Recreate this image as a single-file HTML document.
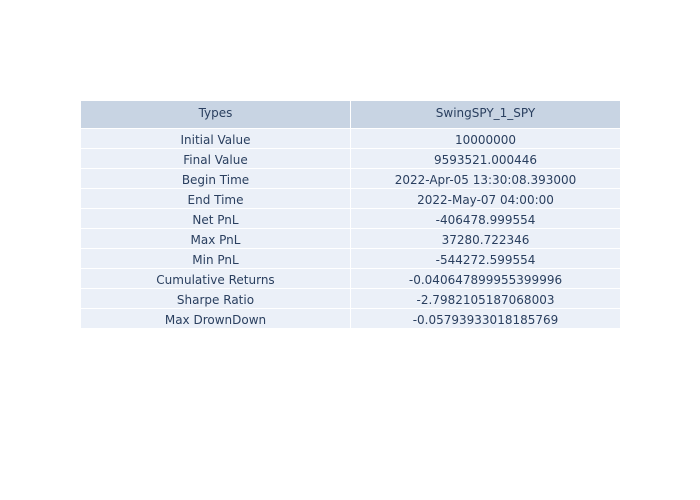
<!DOCTYPE html><html><head><style>
body{margin:0;width:700px;height:500px;background:#fff;position:relative;font-family:"DejaVu Sans",sans-serif;font-size:12px;color:#2a3f5f}
.r{position:absolute;left:81px;width:539px;display:flex}
.c{background:#ebf0f8;text-align:center;line-height:19px;height:17px;padding-top:2px}
.c1{width:269px;margin-right:1px}.c2{width:269px}
.h .c{background:#c8d4e3;height:27px;line-height:25px;padding-top:0}
</style></head><body>
<div class="r h" style="top:101px"><div class="c c1">Types</div><div class="c c2">SwingSPY_1_SPY</div></div>
<div class="r" style="top:129px"><div class="c c1">Initial Value</div><div class="c c2">10000000</div></div>
<div class="r" style="top:149px"><div class="c c1">Final Value</div><div class="c c2">9593521.000446</div></div>
<div class="r" style="top:169px"><div class="c c1">Begin Time</div><div class="c c2">2022-Apr-05 13:30:08.393000</div></div>
<div class="r" style="top:189px"><div class="c c1">End Time</div><div class="c c2">2022-May-07 04:00:00</div></div>
<div class="r" style="top:209px"><div class="c c1">Net PnL</div><div class="c c2">-406478.999554</div></div>
<div class="r" style="top:229px"><div class="c c1">Max PnL</div><div class="c c2">37280.722346</div></div>
<div class="r" style="top:249px"><div class="c c1">Min PnL</div><div class="c c2">-544272.599554</div></div>
<div class="r" style="top:269px"><div class="c c1">Cumulative Returns</div><div class="c c2">-0.040647899955399996</div></div>
<div class="r" style="top:289px"><div class="c c1">Sharpe Ratio</div><div class="c c2">-2.7982105187068003</div></div>
<div class="r" style="top:309px"><div class="c c1">Max DrownDown</div><div class="c c2">-0.05793933018185769</div></div>
</body></html>
